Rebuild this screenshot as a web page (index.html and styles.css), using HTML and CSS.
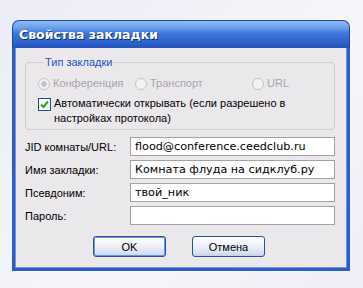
FILE: index.html
```html
<!DOCTYPE html>
<html lang="ru">
<head>
  <meta charset="UTF-8">
  <title>Свойства закладки</title>
  <link rel="stylesheet" href="styles.css">
</head>
<body>
  <div class="window">
    <div class="titlebar">Свойства закладки</div>
    <div class="client">
      <fieldset class="group">
        <legend>Тип закладки</legend>
        <div class="radios">
          <span class="radio checked">Конференция</span>
          <span class="radio">Транспорт</span>
          <span class="radio">URL</span>
        </div>
        <div class="check">
          <span class="box">
            <svg width="9" height="9" viewBox="0 0 9 9"><path d="M1 4.5 L3.5 7 L8 1.5" fill="none" stroke="#21a121" stroke-width="2"/></svg>
          </span>
          <span>Автоматически открывать (если разрешено в настройках протокола)</span>
        </div>
      </fieldset>

      <div class="fields">
        <label>JID комнаты/URL:</label>
        <div class="input">flood@conference.ceedclub.ru</div>
        <label>Имя закладки:</label>
        <div class="input">Комната флуда на сидклуб.ру</div>
        <label>Псевдоним:</label>
        <div class="input">твой_ник</div>
        <label>Пароль:</label>
        <div class="input"></div>
      </div>

      <div class="buttons">
        <button class="default">OK</button>
        <button>Отмена</button>
      </div>
    </div>
  </div>
</body>
</html>
```

FILE: styles.css
```css
html, body {
  margin: 0;
  height: 100%;
}
body {
  background: linear-gradient(135deg, #ececf6, #f6f6fb 60%, #eeeef7);
  padding: 20px 0 0 12px;
  box-sizing: border-box;
  font-family: "Liberation Sans", Arial, sans-serif;
}
.window {
  width: 338px;
  display: flex;
  flex-direction: column;
}
.titlebar {
  height: 28px;
  box-sizing: border-box;
  border-radius: 7px 7px 0 0;
  border: 1px solid #1d47b8;
  border-bottom: none;
  background: linear-gradient(#8dbcf2 0%, #6a9eea 25%, #3f78da 45%, #2e62c8 80%, #2452b8 100%);
  color: #fff;
  font-family: "DejaVu Sans", sans-serif;
  font-weight: bold;
  font-size: 12.5px;
  padding: 6px 0 0 6px;
  text-shadow: 1px 1px 0 #0f2f80;
}
.client {
  background: #ebe8ec;
  border: 3px solid #2b5ec8;
  border-top: none;
  height: 223px;
  box-sizing: border-box;
  padding: 8px 12px 0 10px;
  font-size: 11px;
  color: #000;
  box-shadow: inset 1px 0 0 #6e94e0, inset -1px 0 0 #6e94e0, inset 0 -1px 0 #6e94e0;
}
.group {
  margin: 0;
  padding: 4px 12px 4px 12px;
  border: 1px solid #d3d0d4;
  border-radius: 4px;
  height: 74px;
  box-sizing: border-box;
}
.group legend {
  color: #1f4fc8;
  padding: 0 1px;
  margin-left: 6px;
  line-height: 13px;
}
.radios {
  display: flex;
  color: #a8a6aa;
  line-height: 13px;
  margin-top: 4px;
}
.radio {
  display: flex;
  align-items: center;
  gap: 3px;
}
.radio:nth-child(1) { width: 97px; }
.radio:nth-child(2) { width: 117px; }
.radio::before {
  content: "";
  width: 12px;
  height: 12px;
  border: 1px solid #c4c2c6;
  border-radius: 50%;
  background: #f3f2f4;
  box-sizing: border-box;
}
.radio.checked::before {
  background: radial-gradient(circle, #c4c2c6 0 2.5px, #f3f2f4 3px);
}
.check {
  display: flex;
  gap: 3px;
  margin-top: 6px;
  line-height: 15px;
}
.box {
  flex: none;
  width: 13px;
  height: 13px;
  box-sizing: border-box;
  border: 1px solid #1c5180;
  background: #fff;
  display: flex;
  align-items: center;
  justify-content: center;
  margin-top: 2px;
}
.fields {
  display: grid;
  grid-template-columns: 105px 205px;
  row-gap: 4px;
  margin-top: 7px;
  align-items: center;
}
.input {
  height: 19px;
  box-sizing: border-box;
  border: 1px solid #a4a2a6;
  background: #fff;
  font-family: "DejaVu Sans", sans-serif;
  font-size: 11.2px;
  line-height: 17px;
  padding-left: 4px;
  white-space: nowrap;
  overflow: hidden;
}
.buttons {
  display: flex;
  gap: 26px;
  margin-top: 11px;
  padding-left: 68px;
}
button {
  width: 73px;
  height: 21px;
  border: 1px solid #2a4f9c;
  border-radius: 3px;
  background: linear-gradient(#ffffff, #f0f3f9 40%, #d8e0ef 85%, #c4cfe6);
  font-family: "Liberation Sans", Arial, sans-serif;
  font-size: 11px;
  color: #000;
  padding: 0;
}
button.default {
  box-shadow: inset 0 0 0 1px #6b95e0;
}
```
